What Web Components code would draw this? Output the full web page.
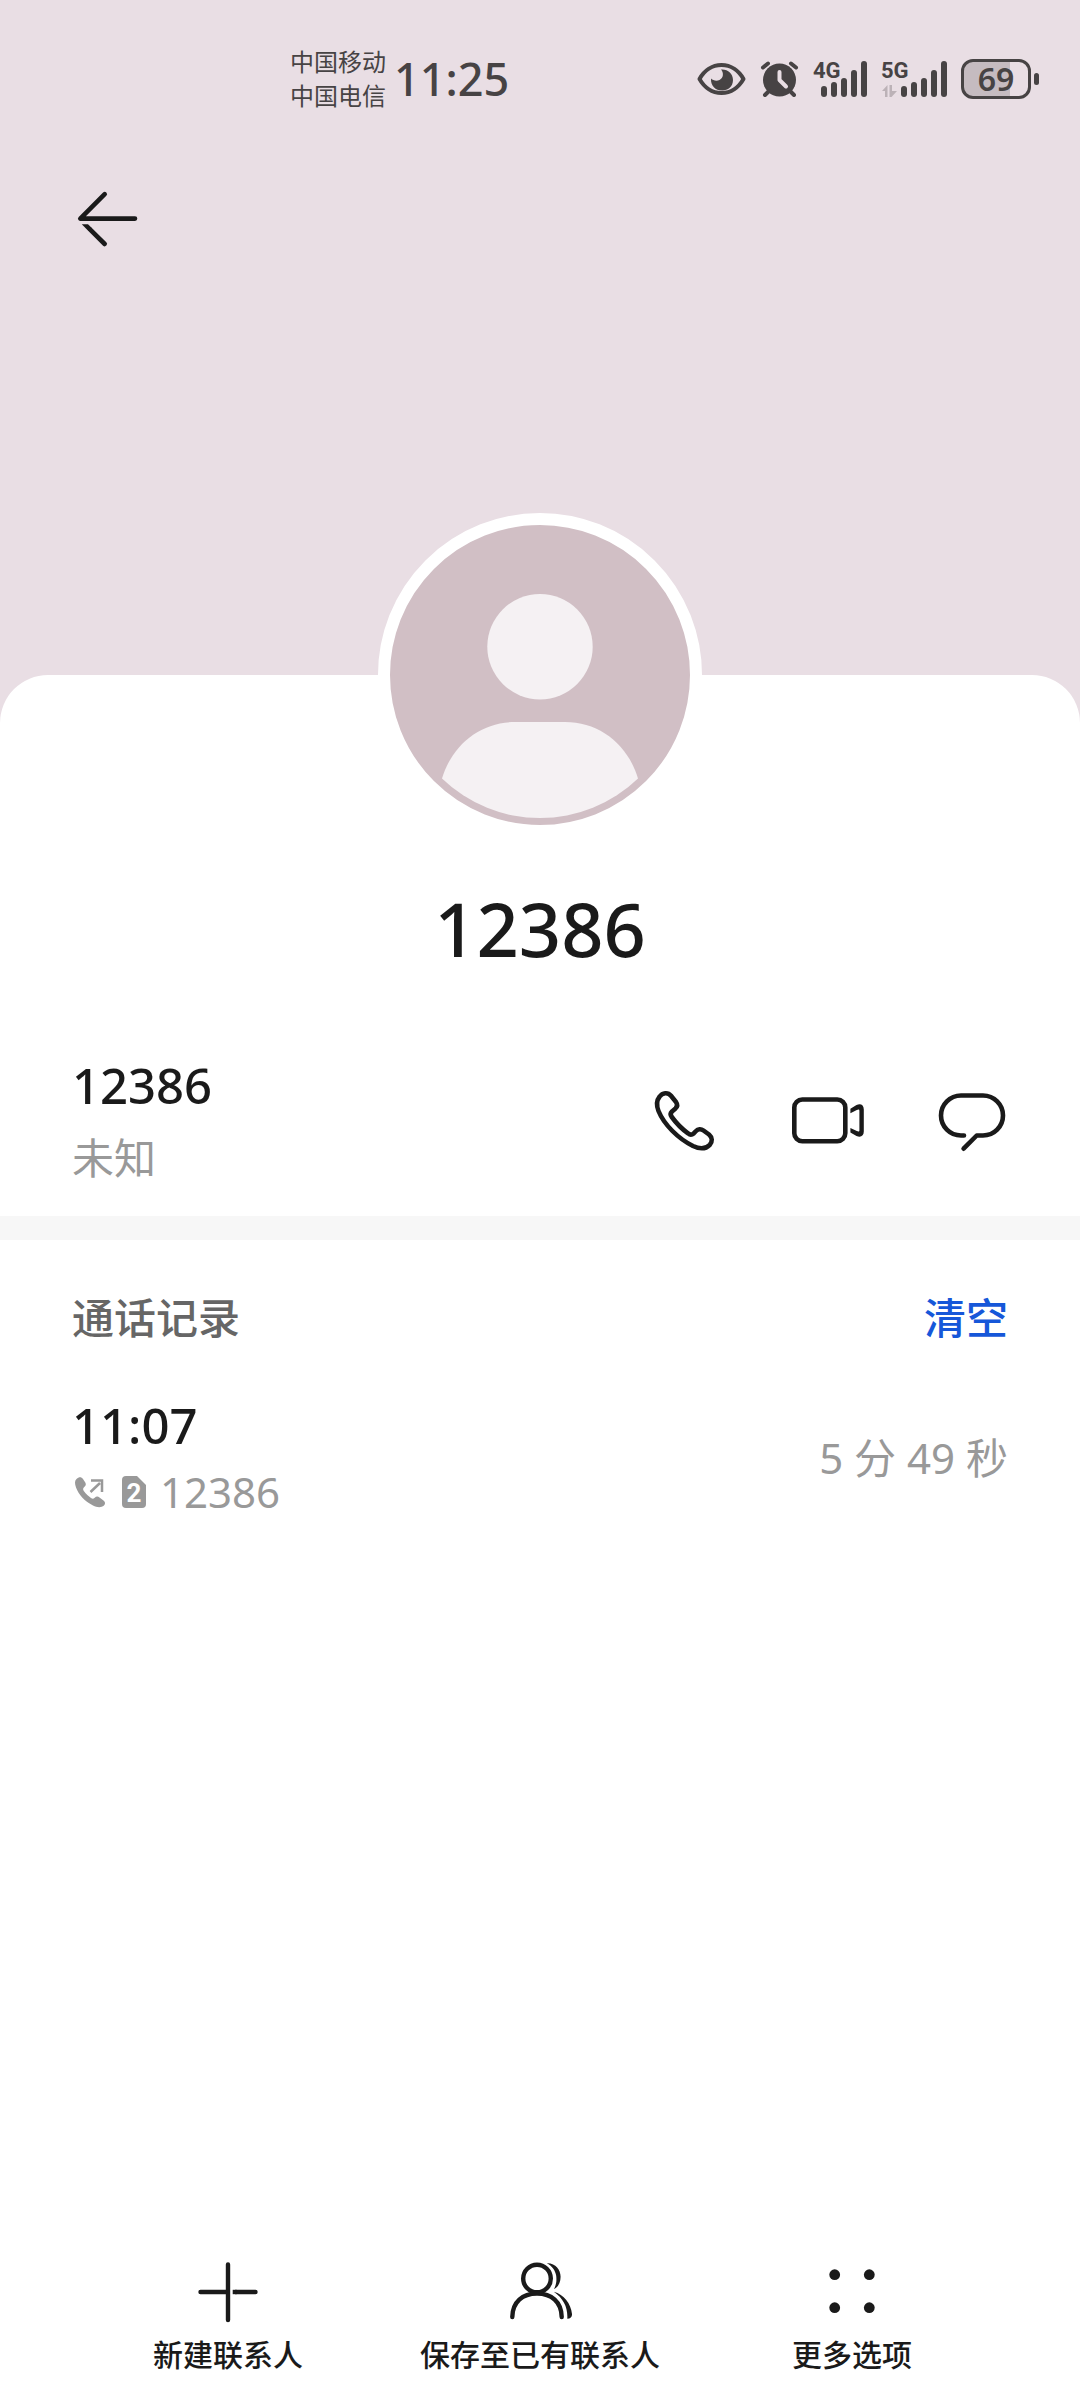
<!DOCTYPE html>
<html lang="zh-CN">
<head>
<meta charset="utf-8">
<meta name="viewport" content="width=device-width, initial-scale=1">
<title>12386</title>
<style>
  html { --ink: #1a1a1a; --muted: #999; --sub: #666; --accent: #1657d9; --status: #474344; --gutter: 72px; }
  body { margin: 0; background: #fff; color: var(--ink); font-family: "Noto Sans", "Noto Sans CJK SC", sans-serif; }
</style>
</head>
<body>
<contact-page>
  <status-bar slot="status" time="11:25" level="69">
    <span slot="carrier">中国移动</span>
    <span slot="carrier">中国电信</span>
  </status-bar>
  <icon-button slot="back" icon="back" label="返回"></icon-button>
  <contact-avatar slot="avatar"></contact-avatar>
  <span slot="name">12386</span>
  <contact-number slot="content">
    <span slot="number">12386</span>
    <span slot="kind">未知</span>
    <icon-button icon="phone" label="拨打电话"></icon-button>
    <icon-button icon="video" label="视频通话"></icon-button>
    <icon-button icon="chat" label="发送信息"></icon-button>
  </contact-number>
  <call-history slot="content">
    <span slot="title">通话记录</span>
    <span slot="action">清空</span>
    <call-record sim="2">
      <span slot="time">11:07</span>
      <span slot="number">12386</span>
      <span slot="duration">5 分 49 秒</span>
    </call-record>
  </call-history>
  <action-bar slot="footer">
    <action-item icon="plus">新建联系人</action-item>
    <action-item icon="people">保存至已有联系人</action-item>
    <action-item icon="more">更多选项</action-item>
  </action-bar>
</contact-page>

<script>
const stroke = 'fill="none" stroke="currentColor" stroke-linecap="round" stroke-linejoin="round"';
const ICONS = {
  back: `<g ${stroke} stroke-width="4.6"><path d="M32.7 11.2 8.3 35.6H63"/><path d="M18 46.4 32.7 61"/></g><path fill="currentColor" d="M9.8 41.2h6.200l3.600 3.600-3.200 3.200z"/>`,
  phone: `<path ${stroke} stroke-width="4.6" d="M11.5 11.8C14.5 7.5 20 7 23 10.8L28 17C30 19.8 29.5 21.5 27.5 23.4L24 26.4C22 28.3 22.3 30 23.8 32C28.5 38.5 34 44 40 48.3C42 50 43.8 50 45.7 48.4L48 46C50 43.8 53 43.600 55.500 45.500L61 49.500C64.500 52.500 64.500 56.500 61.800 59.800C57.500 64.300 52 64.300 45 61C30 53.500 16 39.500 10.500 26C8 19.500 8.300 15.800 11.500 11.800Z"/>`,
  video: `<rect ${stroke} stroke-width="4.6" x="2.3" y="14.500" width="51" height="41.800" rx="8"/><path fill="currentColor" d="M58.400 23.800 64.500 20.100C68.500 18.100 71.800 20 71.800 24.500V46.500C71.800 51 68.500 52.900 64.500 50.900L58.400 47.400V43L64.800 46C66.600 46.800 67.400 46.700 67.400 45V26C67.400 24.300 66.600 24.200 64.800 25L58.400 28.200Z"/>`,
  chat: `<path ${stroke} stroke-width="4.6" d="M28 50.500H25A20 20 0 0 1 25 10.500H47A20 20 0 0 1 47 50.500H40.700L27.600 63.700"/>`,
  plus: `<path ${stroke} stroke-width="4.4" d="M36 8.500V64M8.500 36H34M43.500 36H63.500"/><path fill="currentColor" d="M40.700 33.800h4v4.400h-4z"/>`,
  people: `<g ${stroke} stroke-width="4.4"><circle cx="33" cy="22.500" r="13.800"/><path d="M8.300 61C8.500 46 18.500 37.500 33 37.500S57.500 46 57.700 61"/></g><path fill="currentColor" d="M42.800 7.200C51.500 6.800 56.600 13.500 56.600 20.800C56.600 26.800 54 31.300 50 33.200C52.300 28.500 52.800 24.500 52.200 19.800C51.300 14.200 48 9.800 42.800 7.200ZM49.800 35.800C60 38.500 66.800 47.500 68 58C68.200 61 66.500 62.500 63.300 62.800C64 51.500 59.500 42.500 49.800 35.800Z"/>`,
  more: `<g fill="currentColor"><circle cx="18.700" cy="18.700" r="5.400"/><circle cx="53.300" cy="18.700" r="5.400"/><circle cx="18.700" cy="51.700" r="5.400"/><circle cx="53.300" cy="51.700" r="5.400"/></g>`
};
const icon = name => `<svg width="72" height="72" viewBox="0 0 72 72" aria-hidden="true">${ICONS[name]}</svg>`;
const RESET = `button{margin:0;padding:0;border:0;background:none;color:inherit;font:inherit;cursor:pointer} svg{display:block;flex:none}`;

class Base extends HTMLElement {
  connectedCallback() {
    if (this.shadowRoot) return;
    this.attachShadow({ mode: 'open' }).innerHTML = `<style>${RESET}${this.css}</style>${this.html}`;
  }
}

customElements.define('contact-page', class extends Base {
  get css() { return `
    :host{display:flex;flex-direction:column;min-height:100vh;background:#e9dee4}
    .bar{padding:70px var(--gutter) 0;height:492px;display:flex;align-items:flex-start}
    .card{flex:1;display:flex;flex-direction:column;background:#fff;border-radius:48px 48px 0 0}
    .who{display:flex;flex-direction:column;align-items:center;margin-top:-162px}
    h1{margin:48px 0 82px;font-size:74px;line-height:88px;font-weight:500}
    main{flex:1}`; }
  get html() { return `<slot name="status"></slot><nav class="bar"><slot name="back"></slot></nav>
    <div class="card"><header class="who"><slot name="avatar"></slot><h1><slot name="name"></slot></h1></header>
    <main><slot name="content"></slot></main><slot name="footer"></slot></div>`; }
});

customElements.define('status-bar', class extends Base {
  get css() { return `
    :host{display:flex;justify-content:space-between;align-items:center;padding:45px 41px 0 290px;color:var(--status)}
    .left,.right{display:flex;align-items:center}
    .left{gap:8px}.right{gap:14px}
    .carriers{display:flex;flex-direction:column;font-size:24px;line-height:34px}
    time{font-size:45px;line-height:68px;font-weight:500}
    text{font-family:Roboto,sans-serif;font-weight:700;font-size:22px}
    .battery{display:flex;align-items:center;gap:3px}
    .cell{box-sizing:border-box;width:70px;height:40px;border:3px solid;border-radius:12px;display:flex;align-items:center;justify-content:center;
      font-size:32px;line-height:34px;font-weight:600;background:linear-gradient(90deg,#c5bbc0 46px,transparent 46px)}
    .nub{width:5px;height:12px;border-radius:3px;background:currentColor}`; }
  bars(x) { return [[25, 11], [21, 15], [17, 19], [9, 27], [0, 36]].map(([y, h], i) => `<rect x="${x + i * 10}" y="${y}" width="6" height="${h}" rx="3"/>`).join(''); }
  get html() { return `
    <div class="left"><div class="carriers"><slot name="carrier"></slot></div><time>${this.getAttribute('time')}</time></div>
    <div class="right">
      <svg width="49" height="36" viewBox="0 0 49 36" fill="currentColor"><path fill="none" stroke="currentColor" stroke-width="4" stroke-linejoin="round" d="M2.500 18C7 10 15 4 24.500 4S42 10 46.500 18C42 26 34 32 24.500 32S7 26 2.500 18Z"/><path d="M24 8.500C30.500 7.800 36 12.500 36 19C36 25.500 31 29.500 25 29.500C18.500 29.500 13.500 25 14 17.500C16 19.500 19.500 20.300 22.500 19C26.500 17 27 12 24 8.500Z"/></svg>
      <svg width="39" height="36" viewBox="0 0 39 36"><circle cx="19.500" cy="19" r="16.500" fill="currentColor"/><g ${stroke} stroke-width="4"><path d="M3 6.500 8 2.500M31 2.500 36 6.500M9 30 5 34M30 30 34 34"/><path stroke="#e9dee4" d="M19.500 11V19L26 25.500"/></g></svg>
      <svg width="54" height="52" viewBox="0 -8 54 52" fill="currentColor"><text x="0" y="17">4G</text>${this.bars(8)}</svg>
      <svg width="66" height="52" viewBox="0 -8 66 52" fill="currentColor"><text x="0" y="17">5G</text><path fill="#bcb2b7" d="M1 30 6.500 24V36H4V30ZM8.500 24H11V30H16L10.500 36H8.500Z"/>${this.bars(20)}</svg>
      <div class="battery"><div class="cell">${this.getAttribute('level')}</div><div class="nub"></div></div>
    </div>`; }
});

customElements.define('icon-button', class extends Base {
  get css() { return `:host{display:block}button{display:block}`; }
  get html() { return `<button type="button" aria-label="${this.getAttribute('label')}">${icon(this.getAttribute('icon'))}</button>`; }
});

customElements.define('contact-avatar', class extends Base {
  get css() { return `:host{display:block;border:12px solid #fff;border-radius:50%;background:#d1bfc5}`; }
  get html() { return `<svg width="300" height="300" viewBox="0 0 300 300" fill="#f5f1f3" aria-hidden="true">
    <circle cx="150" cy="121.700" r="52.700"/>
    <path d="M52 253.500C62 220 90 197 125 197H175C210 197 238 220 248 253.500A141 141 0 0 1 52 253.500Z"/></svg>`; }
});

customElements.define('contact-number', class extends Base {
  get css() { return `
    :host{display:flex;align-items:center;justify-content:space-between;padding:0 var(--gutter) 30px;border-bottom:24px solid #f7f7f7}
    .text{display:flex;flex-direction:column;gap:15px}
    .number{font-size:49px;line-height:60px;font-weight:500}
    .kind{font-size:42px;line-height:56px;color:var(--muted)}
    .actions{display:flex;gap:72px}`; }
  get html() { return `<div class="text"><div class="number"><slot name="number"></slot></div><div class="kind"><slot name="kind"></slot></div></div>
    <div class="actions"><slot></slot></div>`; }
});

customElements.define('call-history', class extends Base {
  get css() { return `
    :host{display:block;padding:50px var(--gutter) 0}
    header{display:flex;justify-content:space-between;margin-bottom:49px;font-size:42px;line-height:56px}
    h2{margin:0;font:inherit;font-weight:500;color:var(--sub)}
    button{font-weight:500;color:var(--accent)}`; }
  get html() { return `<header><h2><slot name="title"></slot></h2><button type="button"><slot name="action"></slot></button></header><slot></slot>`; }
});

customElements.define('call-record', class extends Base {
  get css() { return `
    :host{display:flex;align-items:center;justify-content:space-between;font-size:42px;line-height:56px;color:var(--muted)}
    .main{display:flex;flex-direction:column;gap:9px}
    .time{font-size:49px;line-height:60px;font-weight:500;color:var(--ink)}
    .meta{display:flex;align-items:center;gap:14px}
    text{font:700 26px "Liberation Sans Narrow",Roboto,sans-serif}`; }
  get html() { return `<div class="main"><div class="time"><slot name="time"></slot></div><div class="meta">
      <svg width="36" height="32" viewBox="0 0 36 32" fill="currentColor"><path d="M4.500 3C7 .500 9.500 .800 11 3L13.300 6.500C14.500 8.500 13.500 10 12 11.300C10.700 12.500 11 14 12 15.300C14 18 16.500 20.300 19 22C20.500 23 21.500 22.800 22.700 21.700C24.200 20.300 26 20.300 27.500 21.500L31.500 24.500C33.500 26 33.500 28 32 29.500C29 32 25 31.500 21 29.500C13 25.500 6.500 18.500 4 11.500C2.700 7.500 2.500 5 4.500 3Z"/><path fill="none" stroke="currentColor" stroke-width="2.500" d="M19 4.500H30V16M28 7 18.500 16"/></svg>
      <svg width="24" height="32" viewBox="0 0 24 32" fill="currentColor"><path d="M4 0H15L24 9V28A4 4 0 0 1 20 32H4A4 4 0 0 1 0 28V4A4 4 0 0 1 4 0Z"/><text x="12" y="26" text-anchor="middle" fill="#fff">${this.getAttribute('sim')}</text></svg>
      <slot name="number"></slot></div></div><div><slot name="duration"></slot></div>`; }
});

customElements.define('action-bar', class extends Base {
  get css() { return `:host{display:grid;grid-template-columns:repeat(3,1fr);padding:0 var(--gutter) 25px}`; }
  get html() { return `<slot></slot>`; }
});

customElements.define('action-item', class extends Base {
  get css() { return `:host{display:flex;justify-content:center}
    button{display:flex;flex-direction:column;align-items:center;gap:7px;font-size:30px;line-height:40px;font-weight:500;white-space:nowrap}`; }
  get html() { return `<button type="button">${icon(this.getAttribute('icon'))}<span><slot></slot></span></button>`; }
});
</script>
</body>
</html>
